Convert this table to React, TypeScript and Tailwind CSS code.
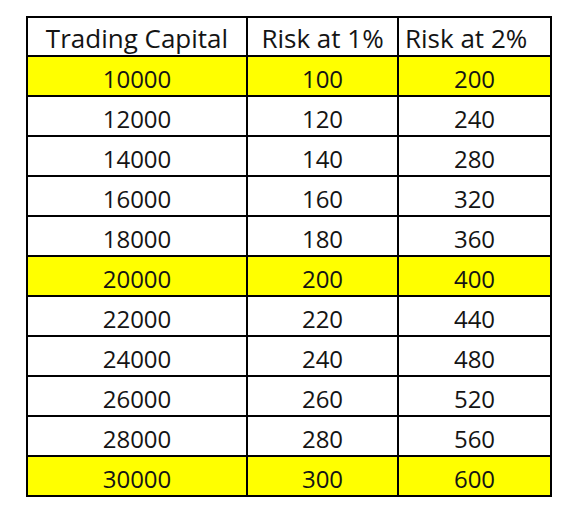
import React from "react";

const rows: [string, string, string, boolean][] = [
  ["10000", "100", "200", true],
  ["12000", "120", "240", false],
  ["14000", "140", "280", false],
  ["16000", "160", "320", false],
  ["18000", "180", "360", false],
  ["20000", "200", "400", true],
  ["22000", "220", "440", false],
  ["24000", "240", "480", false],
  ["26000", "260", "520", false],
  ["28000", "280", "560", false],
  ["30000", "300", "600", true],
];

export default function App() {
  return (
    <div
      className="w-[566px] h-[512px] bg-white pt-[16px] pl-[26px] text-[#141414]"
      style={{ fontFamily: '"Open Sans", "Liberation Sans", sans-serif' }}
    >
      <div className="w-[526px] bg-black p-[2px] grid grid-cols-[218px_149px_151px] gap-[2px] text-[24px] leading-none">
        <div className="h-[37px] bg-white flex items-center justify-center pt-[2px] text-[26px]">Trading Capital</div>
        <div className="h-[37px] bg-white flex items-center justify-center pt-[2px] text-[26px]">Risk at 1%</div>
        <div className="h-[37px] bg-white flex items-center pl-[6px] pt-[2px] text-[26px]">Risk at 2%</div>
        {rows.map(([a, b, c, y]) => (
          <React.Fragment key={a}>
            <div className={`h-[38px] flex items-center justify-center pt-[5px] ${y ? "bg-[#ffff00]" : "bg-white"}`}>{a}</div>
            <div className={`h-[38px] flex items-center justify-center pt-[5px] ${y ? "bg-[#ffff00]" : "bg-white"}`}>{b}</div>
            <div className={`h-[38px] flex items-center justify-center pt-[5px] ${y ? "bg-[#ffff00]" : "bg-white"}`}>{c}</div>
          </React.Fragment>
        ))}
      </div>
    </div>
  );
}
